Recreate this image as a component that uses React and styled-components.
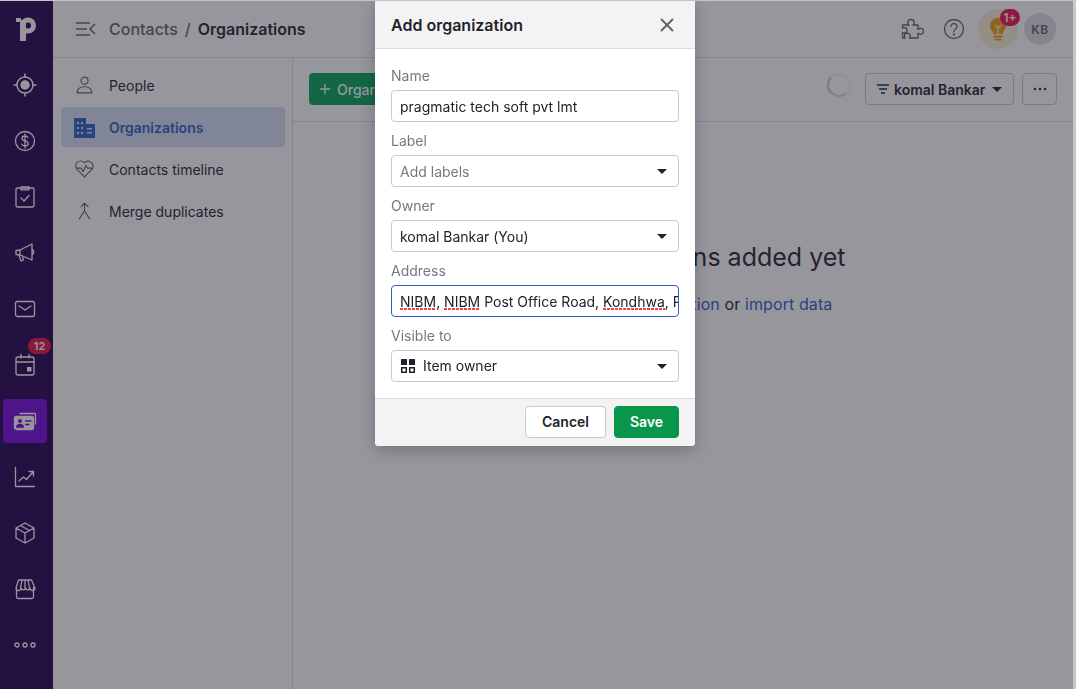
import React from 'react';
import styled, { createGlobalStyle } from 'styled-components';
import { Plus, X } from 'lucide-react';

const GlobalStyle = createGlobalStyle`
  html, body {
    margin: 0;
    padding: 0;
    height: 100%;
    overflow: hidden;
  }
  body {
    font-family: Inter, "Liberation Sans", sans-serif;
    font-size: 14px;
    color: #21232c;
    background: #c8c8ca;
  }
`;

const Frame = styled.div`
  width: 1073px;
  height: 688px;
  margin-top: 1px;
  display: flex;
  background: #fff;
`;

const TopLine = styled.div`
  position: fixed;
  top: 0;
  left: 0;
  right: 0;
  height: 1px;
  background: #c4c4c6;
  z-index: 5;
`;

const Rail = styled.nav`
  width: 53px;
  flex: none;
  box-sizing: border-box;
  padding-left: 3px;
  background: #230050;
  display: flex;
  flex-direction: column;
  align-items: flex-start;
`;

const RailLogo = styled.div`
  width: 46px;
  height: 50px;
  box-sizing: border-box;
  padding-top: 6px;
  display: flex;
  align-items: center;
  justify-content: center;
  color: #fff;
`;

const RailItem = styled.div`
  position: relative;
  width: 44px;
  height: 44px;
  margin-bottom: 12px;
  border-radius: 4px;
  display: flex;
  align-items: center;
  justify-content: center;
  color: #fff;
  background: ${(p) => (p.$active ? '#7306d8' : 'transparent')};
  &:nth-child(2) {
    margin-top: 12px;
  }
`;

const RailBadge = styled.span`
  position: absolute;
  top: -5px;
  right: -4px;
  width: 23px;
  height: 16px;
  border-radius: 8px;
  background: #e0103f;
  color: #fff;
  font-size: 11px;
  font-weight: 600;
  line-height: 16px;
  text-align: center;
`;

const Main = styled.div`
  flex: 1;
  min-width: 0;
  display: flex;
  flex-direction: column;
`;

const Header = styled.header`
  height: 57px;
  flex: none;
  box-sizing: border-box;
  border-bottom: 1px solid #dcdcde;
  display: flex;
  align-items: center;
  padding-left: 22px;
  padding-right: 17px;
  background: #fff;
`;

const Crumbs = styled.div`
  margin-left: 12px;
  font-size: 16px;
  font-weight: 500;
  color: #5f626b;
  display: flex;
  gap: 7px;
`;

const CrumbCurrent = styled.span`
  font-weight: 600;
  color: #21232c;
`;

const HeaderTools = styled.div`
  margin-left: auto;
  display: flex;
  align-items: center;
`;

const ToolIcon = styled.span`
  display: flex;
  width: 42px;
  justify-content: center;
  color: #5f626b;
`;

const Tip = styled.div`
  position: relative;
  width: 40px;
  height: 40px;
  margin-left: 3px;
  margin-right: 6px;
  border-radius: 50%;
  background: #f6f1d4;
  display: flex;
  align-items: center;
  justify-content: center;
`;

const TipBadge = styled.span`
  position: absolute;
  top: 0;
  right: -2px;
  width: 20px;
  height: 17px;
  border-radius: 9px;
  background: #f00f4a;
  color: #fff;
  font-size: 12px;
  font-weight: 600;
  line-height: 17px;
  text-align: center;
`;

const Avatar = styled.div`
  width: 32px;
  height: 32px;
  border-radius: 50%;
  background: #dcdcde;
  color: #5f626b;
  font-size: 12px;
  font-weight: 600;
  letter-spacing: 0.5px;
  display: flex;
  align-items: center;
  justify-content: center;
`;

const Body = styled.div`
  flex: 1;
  display: flex;
  min-height: 0;
`;

const SideMenu = styled.aside`
  width: 240px;
  flex: none;
  box-sizing: border-box;
  border-right: 1px solid #dcdcde;
  padding: 7px 7px 7px 8px;
  display: flex;
  flex-direction: column;
  gap: 2px;
`;

const SideItem = styled.div`
  height: 40px;
  border-radius: 4px;
  display: flex;
  align-items: center;
  gap: 14px;
  padding-left: 13px;
  font-weight: ${(p) => (p.$active ? 600 : 400)};
  color: ${(p) => (p.$active ? '#2c5ec4' : '#21232c')};
  background: ${(p) => (p.$active ? '#d2e0f5' : 'transparent')};
`;

const SideIcon = styled.span`
  display: flex;
  width: 21px;
  justify-content: center;
  color: ${(p) => (p.$active ? '#2c5ec4' : '#5f626b')};
`;

const Content = styled.main`
  flex: 1;
  min-width: 0;
  display: flex;
  flex-direction: column;
`;

const Toolbar = styled.div`
  height: 64px;
  flex: none;
  box-sizing: border-box;
  border-bottom: 1px solid #dcdcde;
  display: flex;
  align-items: center;
  padding: 0 16px 1px 16px;
`;

const AddButton = styled.div`
  height: 32px;
  width: 200px;
  border-radius: 4px;
  background: #00a655;
  color: #fff;
  font-weight: 500;
  display: flex;
  align-items: center;
  gap: 4px;
  padding-left: 8px;
  box-sizing: border-box;
`;

const ToolbarRight = styled.div`
  margin-left: auto;
  display: flex;
  align-items: center;
`;

const Spinner = styled.div`
  width: 20px;
  height: 20px;
  border-radius: 50%;
  border: 2px solid #f2f2f3;
  border-left-color: #c9c9cc;
  border-bottom-color: #d9d9db;
  margin-right: 14px;
  margin-bottom: 8px;
`;

const FilterButton = styled.div`
  height: 32px;
  box-sizing: border-box;
  width: 149px;
  border: 1px solid #c8c9cc;
  border-radius: 4px;
  display: flex;
  align-items: center;
  padding-left: 10px;
  gap: 4px;
  font-weight: 600;
  color: #21232c;
  background: #fff;
`;

const Caret = styled.span`
  width: 0;
  height: 0;
  border-left: 5px solid transparent;
  border-right: 5px solid transparent;
  border-top: 5px solid #21232c;
  flex: none;
  margin-left: ${(p) => p.$left || 0}px;
`;

const MoreButton = styled(FilterButton)`
  width: 35px;
  margin-left: 8px;
  padding: 0;
  justify-content: center;
`;

const Empty = styled.div`
  flex: 1;
  display: flex;
  flex-direction: column;
  align-items: center;
  padding-top: 119px;
`;

const EmptyTitle = styled.div`
  font-size: 25px;
  line-height: 32px;
  color: #21232c;
  white-space: nowrap;
`;

const EmptyText = styled.div`
  margin-top: 19px;
  padding-left: 6px;
  font-size: 16px;
  letter-spacing: 0.1px;
  line-height: 24px;
  color: #21232c;
  white-space: nowrap;
`;

const TextLink = styled.span`
  color: #2c5ec4;
`;

const Backdrop = styled.div`
  position: fixed;
  top: 1px;
  left: 0;
  width: 1073px;
  bottom: 0;
  background: rgba(40, 35, 50, 0.48);
  z-index: 2;
`;

const Modal = styled.div`
  position: fixed;
  top: 1px;
  left: 375px;
  width: 320px;
  height: 445px;
  z-index: 3;
  background: #fff;
  border-radius: 0 0 4px 4px;
  box-shadow: 0 4px 16px rgba(0, 0, 0, 0.25);
  display: flex;
  flex-direction: column;
`;

const ModalHeader = styled.div`
  height: 48px;
  flex: none;
  box-sizing: border-box;
  background: #f3f3f4;
  border-bottom: 1px solid #dcdcde;
  padding: 0 16px;
  display: flex;
  align-items: center;
  justify-content: space-between;
`;

const ModalTitle = styled.h2`
  margin: 0;
  font-size: 16px;
  font-weight: 600;
  color: #21232c;
`;

const CloseButton = styled.span`
  display: flex;
  color: #5f626b;
  margin-right: 1px;
`;

const ModalBody = styled.div`
  flex: 1;
  padding: 17px 16px 0;
  display: flex;
  flex-direction: column;
  gap: 9px;
`;

const Field = styled.div`
  display: flex;
  flex-direction: column;
  gap: 6px;
`;

const FieldLabel = styled.label`
  font-size: 14px;
  line-height: 20px;
  height: 18px;
  color: #747881;
`;

const Control = styled.div`
  height: 32px;
  box-sizing: border-box;
  border-radius: 4px;
  border: 1px solid ${(p) => (p.$focus ? '#2c5ec4' : '#c8c9cc')};
  padding: 0 ${(p) => (p.$focus ? 0 : 11)}px 0 8px;
  display: flex;
  align-items: center;
  font-size: 14px;
  color: ${(p) => (p.$muted ? '#747881' : '#21232c')};
  overflow: hidden;
  white-space: nowrap;
`;

const ControlText = styled.span`
  flex: 1;
  min-width: 0;
`;

const VisibleText = styled(ControlText)`
  margin-bottom: 2px;
`;

const Misspelled = styled.span`
  background: repeating-linear-gradient(90deg, #f4404c 0 3px, transparent 3px 4px) 0 100% / 100% 2px no-repeat;
`;

const GridIcon = styled.span`
  display: flex;
  color: #21232c;
  margin-right: 7px;
`;

const ModalFooter = styled.div`
  height: 48px;
  flex: none;
  box-sizing: border-box;
  background: #f3f3f4;
  border-top: 1px solid #dcdcde;
  border-radius: 0 0 4px 4px;
  padding: 0 16px 2px;
  display: flex;
  align-items: center;
  justify-content: flex-end;
  gap: 8px;
`;

const FooterButton = styled.div`
  height: 32px;
  box-sizing: border-box;
  border-radius: 4px;
  display: flex;
  align-items: center;
  justify-content: center;
  font-weight: 600;
  width: ${(p) => (p.$primary ? 65 : 81)}px;
  color: ${(p) => (p.$primary ? '#fff' : '#21232c')};
  background: ${(p) => (p.$primary ? '#08964a' : '#fff')};
  border: 1px solid ${(p) => (p.$primary ? '#08964a' : '#c8c9cc')};
`;

const Svg = ({ size = 24, children, sw = 1.3 }) => (
  <svg width={size} height={size} viewBox="0 0 24 24" fill="none" stroke="currentColor" strokeWidth={sw} strokeLinecap="round" strokeLinejoin="round">
    {children}
  </svg>
);

const railIcons = [
  <Svg key="target" sw={1.5}>
    <circle cx="12" cy="12" r="8" />
    <circle cx="12" cy="12" r="4" fill="currentColor" />
    <path d="M12 1v3M12 20v3M1 12h3M20 12h3" />
  </Svg>,
  <Svg key="deals">
    <circle cx="12" cy="12" r="9.5" />
    <path d="M15 8.5c-.6-1-1.700-1.500-3-1.500-1.800 0-3 1-3 2.400 0 3.300 6.200 1.800 6.200 5.100 0 1.500-1.300 2.500-3.200 2.500-1.400 0-2.600-.6-3.200-1.700M12 5v14" />
  </Svg>,
  <Svg key="tasks">
    <rect x="3" y="3" width="18" height="19" rx="1.5" />
    <path d="M8 1.800h8v3H8zM8 13l3 3 5-5.500" />
  </Svg>,
  <Svg key="campaigns">
    <path d="M3 9.500l4-.5 12-6v16L7 14l-4-.5zM19 8.500c2 .5 2.500 4.500 0 5.500M7 9v5M6 14l2 6 2.500-1-1.500-4.500" />
  </Svg>,
  <Svg key="mail">
    <rect x="2.5" y="4.5" width="19" height="15" rx="2" />
    <path d="M6 9l6 4 6-4" />
  </Svg>,
  <Svg key="calendar">
    <rect x="3" y="4" width="18" height="18" rx="2" />
    <path d="M3 9h18M8 1.500V5M16 1.500V5" />
    <rect x="14" y="14" width="4.5" height="4.5" fill="currentColor" stroke="none" />
  </Svg>,
  <Svg key="contacts">
    <path d="M7 4.500h14.500a1 1 0 0 1 1 1V15" />
    <rect x="1.5" y="7.5" width="19" height="13" rx="2" fill="currentColor" />
    <circle cx="7" cy="12" r="2" fill="#7306d8" stroke="none" />
    <path d="M3.500 18c.5-2 2-2.500 3.500-2.500s3 .5 3.500 2.500zM12.500 12H18M12.500 15.500H16" stroke="#7306d8" fill="#7306d8" />
  </Svg>,
  <Svg key="insights">
    <path d="M2.500 2.500v19h19M6 16l4.500-4 3 2.500L20 7M16 6.500h4.500V11" />
  </Svg>,
  <Svg key="products">
    <path d="M12 2l9 5v10l-9 5-9-5V7zM3 7l9 5 9-5M12 12v10M7.500 4.500l9 5" />
  </Svg>,
  <Svg key="marketplace">
    <path d="M3.500 10.500V20a1.500 1.500 0 0 0 1.500 1.500h14a1.500 1.500 0 0 0 1.500-1.500v-9.500M5.500 3h13l3.500 8a2.500 2.500 0 0 1-5 0 2.300 2.300 0 0 1-4.500 0 2.300 2.300 0 0 1-4.500 0 2.500 2.500 0 0 1-5 0zM9 3l-1.500 8M15 3l1.500 8M12 3v8" />
  </Svg>,
  <Svg key="more">
    <circle cx="4" cy="12" r="2" />
    <circle cx="12" cy="12" r="2" />
    <circle cx="20" cy="12" r="2" />
  </Svg>,
];

const fields = [
  { label: 'Name', value: 'pragmatic tech soft pvt lmt' },
  { label: 'Label', value: 'Add labels', muted: true, select: true },
  { label: 'Owner', value: 'komal Bankar (You)', select: true },
];

export default function App() {
  return (
    <>
      <GlobalStyle />
      <TopLine />
      <Frame>
        <Rail>
          <RailLogo>
            <svg width="20" height="24" viewBox="0 0 20 24" fill="none">
              <path d="M0 1h5v4H0zM4 3h6v21H4z" fill="currentColor" />
              <circle cx="12" cy="8.500" r="5.500" stroke="currentColor" strokeWidth="5" />
            </svg>
          </RailLogo>
          {railIcons.map((icon, i) => (
            <RailItem key={i} $active={i === 6}>
              {icon}
              {i === 5 && <RailBadge>12</RailBadge>}
            </RailItem>
          ))}
        </Rail>
        <Main>
          <Header>
            <svg width="22" height="16" viewBox="0 0 22 16" fill="none" stroke="#5f626b" strokeWidth="1.5">
              <path d="M1 2h14M1 8h11M1 14h14M20 3l-5 5 5 5" />
            </svg>
            <Crumbs>
              Contacts <span>/</span> <CrumbCurrent>Organizations</CrumbCurrent>
            </Crumbs>
            <HeaderTools>
              <ToolIcon>
                <Svg>
                  <path d="M2.500 8H9c-.8-.9-1.200-1.700-1.200-2.600A3.100 3.100 0 0 1 11 2.500a3.100 3.100 0 0 1 3.200 2.900c0 .9-.4 1.700-1.200 2.600h5v4.500c.9-.8 1.700-1.200 2.500-1.200a3 3 0 0 1 0 6c-.8 0-1.600-.4-2.500-1.200V21H9.500c.5-.6.700-1.200.7-1.900a2.900 2.900 0 0 0-5.800 0c0 .7.200 1.300.7 1.900H2.500v-5.500c.6.400 1.100.6 1.800.6a2.700 2.700 0 0 0 0-5.400c-.7 0-1.200.2-1.800.6z" />
                </Svg>
              </ToolIcon>
              <ToolIcon>
                <Svg>
                  <circle cx="12" cy="12" r="9.5" />
                  <path d="M9 9.500a3 3 0 1 1 4.700 2.500c-1 .7-1.700 1.300-1.700 2.500" />
                  <circle cx="12" cy="17.500" r="0.5" />
                </Svg>
              </ToolIcon>
              <Tip>
                <svg width="18" height="24" viewBox="0 0 18 24" fill="#f39c12">
                  <path d="M9 1a8 8 0 0 0-5 14.200V17h10v-1.800A8 8 0 0 0 9 1z" />
                  <rect x="4" y="18.5" width="10" height="2" rx="1" />
                  <rect x="5.5" y="21.5" width="7" height="2" rx="1" />
                  <path d="M6 8l3 3 3-3M9 11v6" fill="none" stroke="#f6f1d4" strokeWidth="1.5" />
                </svg>
                <TipBadge>1+</TipBadge>
              </Tip>
              <Avatar>KB</Avatar>
            </HeaderTools>
          </Header>
          <Body>
            <SideMenu>
              <SideItem>
                <SideIcon>
                  <Svg>
                    <circle cx="12" cy="7" r="4" />
                    <path d="M3.500 21c0-4 3-7 8.500-7s8.500 3 8.500 7z" />
                  </Svg>
                </SideIcon>
                People
              </SideItem>
              <SideItem $active>
                <SideIcon $active>
                  <svg width="21" height="21" viewBox="0 0 21 21" fill="currentColor">
                    <path fillRule="evenodd" d="M1 1h11v6h8a1 1 0 0 1 1 1v12a1 1 0 0 1-1 1H1a1 1 0 0 1-1-1V2a1 1 0 0 1 1-1zM3 5h2v2H3zM7 5h2v2H7zM3 10h2v2H3zM7 10h2v2H7zM3 15h2v2H3zM7 15h2v2H7zM13 11h5v1.500h-5zM13 15h5v1.500h-5z" />
                  </svg>
                </SideIcon>
                Organizations
              </SideItem>
              <SideItem>
                <SideIcon>
                  <Svg>
                    <path d="M12 21L3.500 12.500a5.700 5.700 0 0 1 0-8 5.700 5.700 0 0 1 8 0l.5.5.5-.5a5.700 5.700 0 0 1 8 8z" />
                    <path d="M3 11h5l2.500 4 3-7 2 3h5" />
                  </Svg>
                </SideIcon>
                Contacts timeline
              </SideItem>
              <SideItem>
                <SideIcon>
                  <Svg>
                    <path d="M12 3v9M8 7l4-4 4 4M12 12l-6 9M12 12l6 9" />
                  </Svg>
                </SideIcon>
                Merge duplicates
              </SideItem>
            </SideMenu>
            <Content>
              <Toolbar>
                <AddButton>
                  <Plus size={16} strokeWidth={2} />
                  Organization
                </AddButton>
                <ToolbarRight>
                  <Spinner />
                  <FilterButton>
                    <svg width="14" height="10" viewBox="0 0 14 10" fill="none" stroke="#21232c" strokeWidth="1.5">
                      <path d="M1 1h12M3 5h8M5 9h4" />
                    </svg>
                    komal Bankar
                    <Caret $left={3} />
                  </FilterButton>
                  <MoreButton>
                    <svg width="14" height="4" viewBox="0 0 14 4" fill="#21232c">
                      <circle cx="2" cy="2" r="1.3" />
                      <circle cx="7" cy="2" r="1.3" />
                      <circle cx="12" cy="2" r="1.3" />
                    </svg>
                  </MoreButton>
                </ToolbarRight>
              </Toolbar>
              <Empty>
                <EmptyTitle>No organizations added yet</EmptyTitle>
                <EmptyText>
                  <TextLink>Add a new organization</TextLink> or <TextLink>import data</TextLink>
                </EmptyText>
              </Empty>
            </Content>
          </Body>
        </Main>
      </Frame>
      <Backdrop />
      <Modal>
        <ModalHeader>
          <ModalTitle>Add organization</ModalTitle>
          <CloseButton>
            <X size={22} strokeWidth={2} />
          </CloseButton>
        </ModalHeader>
        <ModalBody>
          {fields.map((f) => (
            <Field key={f.label}>
              <FieldLabel>{f.label}</FieldLabel>
              <Control $muted={f.muted}>
                <ControlText>{f.value}</ControlText>
                {f.select && <Caret />}
              </Control>
            </Field>
          ))}
          <Field>
            <FieldLabel>Address</FieldLabel>
            <Control $focus>
              <ControlText>
                <Misspelled>NIBM</Misspelled>, <Misspelled>NIBM</Misspelled> Post Office Road, <Misspelled>Kondhwa</Misspelled>, Pune
              </ControlText>
            </Control>
          </Field>
          <Field>
            <FieldLabel>Visible to</FieldLabel>
            <Control>
              <GridIcon>
                <svg width="16" height="16" viewBox="0 0 16 16" fill="currentColor">
                  <rect x="1" y="1" width="6" height="6" rx="0.5" />
                  <rect x="9" y="1" width="6" height="6" rx="0.5" />
                  <path fillRule="evenodd" d="M1 9h6v6H1zM2.500 10.500v3h3v-3zM9 9h6v6H9zM10.500 10.500v3h3v-3z" />
                </svg>
              </GridIcon>
              <VisibleText>Item owner</VisibleText>
              <Caret />
            </Control>
          </Field>
        </ModalBody>
        <ModalFooter>
          <FooterButton>Cancel</FooterButton>
          <FooterButton $primary>Save</FooterButton>
        </ModalFooter>
      </Modal>
    </>
  );
}
